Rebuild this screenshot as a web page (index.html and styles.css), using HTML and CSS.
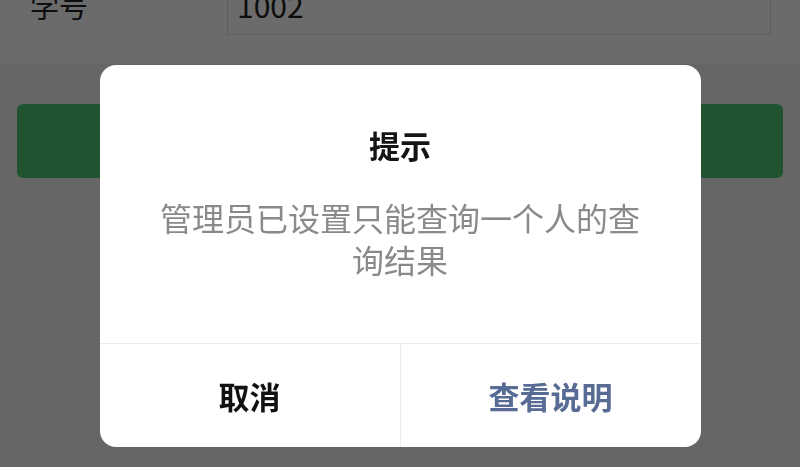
FILE: index.html
```html
<!DOCTYPE html>
<html lang="zh-CN">
<head>
  <meta charset="UTF-8" />
  <meta name="viewport" content="width=device-width, initial-scale=1.0" />
  <title>查询</title>
  <link rel="stylesheet" href="styles.css">
</head>
<body>
  <div class="page">
    <div class="form-row">
      <label class="form-label" for="sno">学号</label>
      <div class="form-input" id="sno">1002</div>
    </div>
    <button class="btn-primary">查询</button>
  </div>

  <div class="mask">
    <div class="dialog">
      <div class="dialog-title">提示</div>
      <div class="dialog-body">管理员已设置只能查询一个人的查询结果</div>
      <div class="dialog-footer">
        <button class="dialog-btn">取消</button>
        <button class="dialog-btn primary">查看说明</button>
      </div>
    </div>
  </div>
</body>
</html>
```

FILE: styles.css
```css
body { margin: 0; background: #f2f2f2; font-family: "Noto Sans CJK SC", "Noto Sans", sans-serif; overflow: hidden; }
.page { margin-top: -40px; }
.form-row { display: flex; align-items: flex-start; background: #fff; height: 105px; padding: 15px 29px 0 30px; border-bottom: 1px solid #eee; box-sizing: border-box; }
.form-label { width: 197px; font-size: 29px; line-height: 60px; color: #222; }
.form-input { flex: 1; height: 60px; border: 1px solid #e3e3e3; box-sizing: border-box; padding-left: 9px; font-size: 30px; line-height: 58px; color: #222; }
.btn-primary { display: block; width: calc(100% - 34px); margin: 39px 17px 0; height: 74px; border: none; border-radius: 6px; background: #4ec572; color: #fff; font-size: 30px; font-family: inherit; }

.mask { position: fixed; inset: 0; background: rgba(0, 0, 0, 0.58); display: flex; justify-content: center; align-items: flex-start; padding-top: 65px; }
.dialog { width: 601px; background: #fff; border-radius: 16px; overflow: hidden; text-align: center; }
.dialog-title { padding-top: 60px; font-size: 31px; line-height: 40px; font-weight: bold; color: #151515; }
.dialog-body { margin-top: 31px; padding: 0 48px 63px; font-size: 32px; line-height: 42px; color: #8a8a8a; }
.dialog-footer { display: flex; border-top: 1px solid #ebebeb; height: 103px; }
.dialog-btn { flex: 1; border: none; background: none; font-family: inherit; font-size: 31px; font-weight: bold; color: #111; }
.dialog-btn + .dialog-btn { border-left: 1px solid #ebebeb; }
.dialog-btn.primary { color: #576b95; }
```
